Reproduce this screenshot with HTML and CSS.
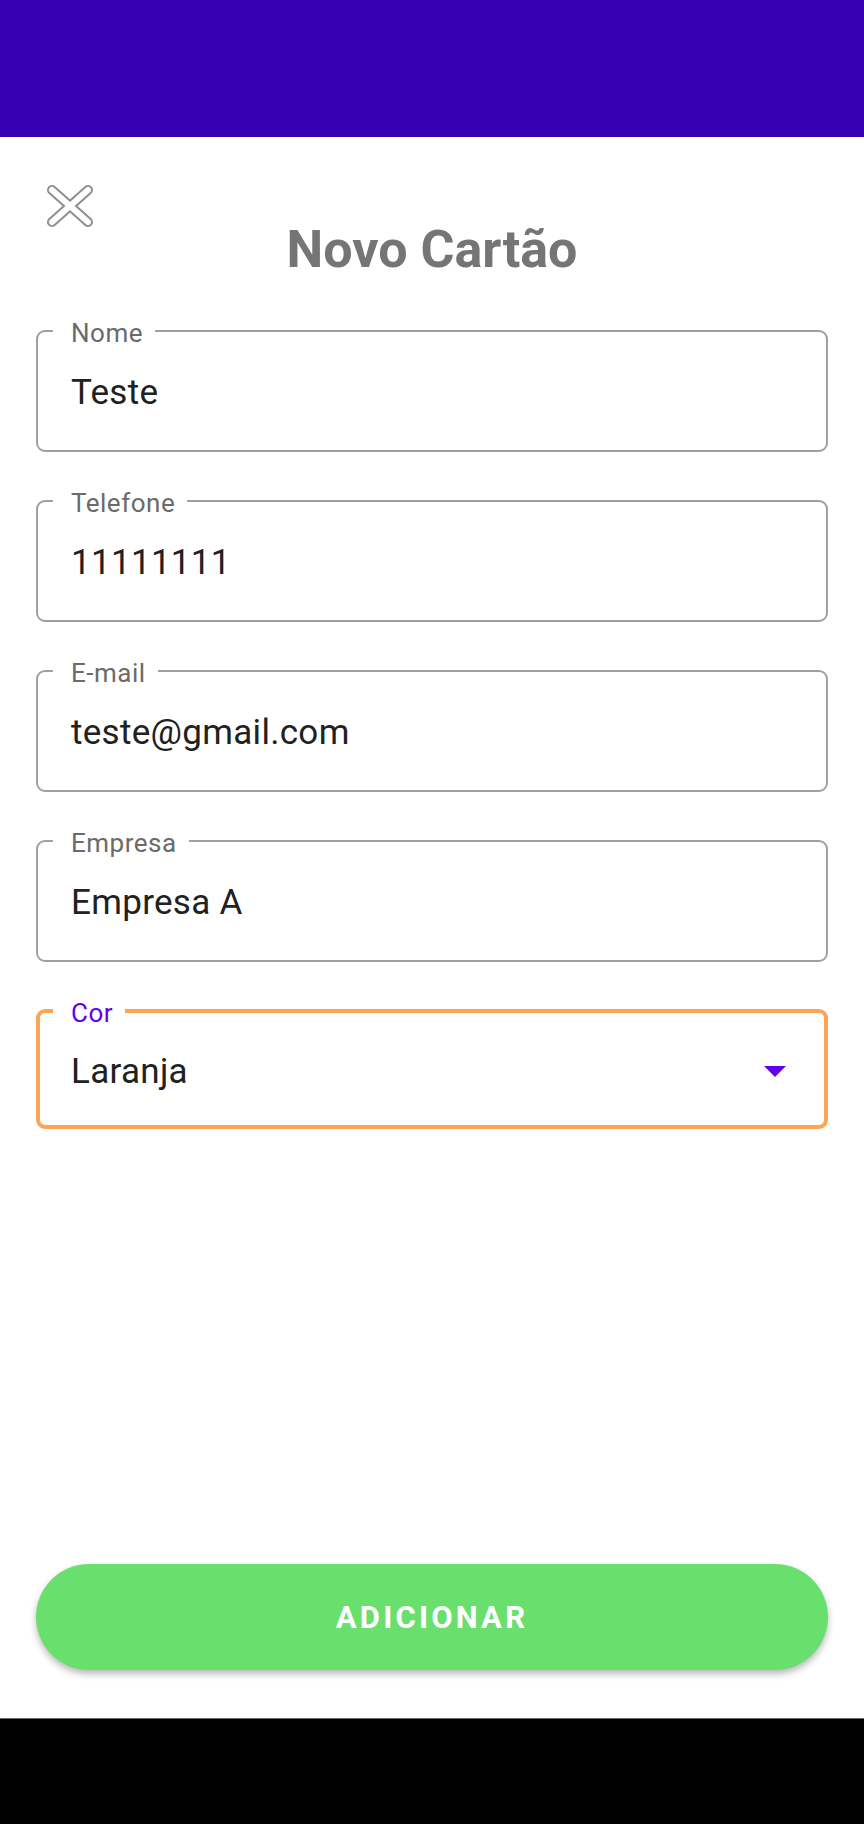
FILE: index.html
```html
<!DOCTYPE html>
<html lang="pt">
<head>
<meta charset="utf-8">
<title>Novo Cartão</title>
<link rel="stylesheet" href="styles.css">
</head>
<body>
<div class="screen">
  <header class="appbar"></header>
  <main class="content">
    <div class="top">
      <button class="close" aria-label="Fechar">
        <svg width="46" height="42" viewBox="0 0 46 42">
          <g stroke-linecap="round" fill="none">
            <line x1="5" y1="5" x2="41" y2="37" stroke="#8f8f8f" stroke-width="10"/>
            <line x1="41" y1="5" x2="5" y2="37" stroke="#8f8f8f" stroke-width="10"/>
            <line x1="5" y1="5" x2="41" y2="37" stroke="#ffffff" stroke-width="6"/>
            <line x1="41" y1="5" x2="5" y2="37" stroke="#ffffff" stroke-width="6"/>
          </g>
        </svg>
      </button>
      <h1 class="title">Novo Cartão</h1>
    </div>
    <form class="form">
      <fieldset class="field">
        <legend>Nome</legend>
        <div class="value">Teste</div>
      </fieldset>
      <fieldset class="field">
        <legend>Telefone</legend>
        <div class="value">11111111</div>
      </fieldset>
      <fieldset class="field">
        <legend>E-mail</legend>
        <div class="value">teste@gmail.com</div>
      </fieldset>
      <fieldset class="field">
        <legend>Empresa</legend>
        <div class="value">Empresa A</div>
      </fieldset>
      <fieldset class="field field-focused">
        <legend>Cor</legend>
        <div class="value select-row">
          <span>Laranja</span>
          <svg class="arrow" width="22" height="11" viewBox="0 0 22 11"><path d="M0 0 H22 L11 11 Z" fill="#6200ee"/></svg>
        </div>
      </fieldset>
    </form>
    <div class="spacer"></div>
    <button class="submit">ADICIONAR</button>
  </main>
  <footer class="navbar"></footer>
</div>
</body>
</html>
```

FILE: styles.css
```css
* { box-sizing: border-box; }
html, body { margin: 0; padding: 0; background: #ffffff; }
body { font-family: Roboto, "Noto Sans", "Liberation Sans", sans-serif; }

.screen {
  width: 864px;
  height: 1824px;
  display: flex;
  flex-direction: column;
}

.appbar {
  height: 137px;
  background: #3700b3;
  flex: none;
}

.content {
  flex: 1;
  display: flex;
  flex-direction: column;
  padding: 48px 36px 0;
}

.top {
  display: grid;
  grid-template-columns: 1fr auto 1fr;
  align-items: start;
}

.close {
  grid-column: 1;
  justify-self: start;
  margin: 0 0 0 11px;
  padding: 0;
  border: 0;
  background: none;
  width: 46px;
  height: 42px;
  display: block;
}
.close svg { display: block; }

.title {
  grid-column: 2;
  margin: 34px 0 0;
  font-size: 52px;
  line-height: 61px;
  font-weight: 700;
  color: #757575;
  white-space: nowrap;
}

.form {
  margin-top: 34px;
  display: flex;
  flex-direction: column;
  gap: 32px;
}

.field {
  margin: 0;
  min-width: 0;
  border: 2px solid #a0a0a0;
  border-radius: 9px;
  padding: 0 15px 36px;
}

.field legend {
  padding: 4px 12px 0 18px;
  font-size: 26px;
  line-height: 30px;
  color: #6b6b6b;
  letter-spacing: 0.5px;
}

.value {
  padding: 23px 0 0 18px;
  font-size: 35px;
  line-height: 43px;
  color: #212121;
  letter-spacing: 0.3px;
}

.field-focused {
  border: 4px solid #ffa354;
  padding: 0 13px 32px;
}
.field-focused legend { color: #6200ee; }
.field-focused .value { padding-top: 22px; }

.select-row {
  display: flex;
  align-items: center;
  justify-content: space-between;
}
.arrow {
  display: block;
  margin-right: 25px;
}

.spacer { flex: 1; }

.submit {
  height: 106px;
  margin: 0 0 48px;
  border: 0;
  border-radius: 53px;
  background: #69df6e;
  color: #ffffff;
  font-family: Roboto, "Noto Sans", "Liberation Sans", sans-serif;
  font-weight: 700;
  font-size: 31px;
  letter-spacing: 3.2px;
  box-shadow: 0 4px 7px rgba(0, 0, 0, 0.28);
  padding: 0;
}

.navbar {
  height: 106px;
  flex: none;
  background: #000000;
  border-top: 1px solid #6a6a6a;
}
```
